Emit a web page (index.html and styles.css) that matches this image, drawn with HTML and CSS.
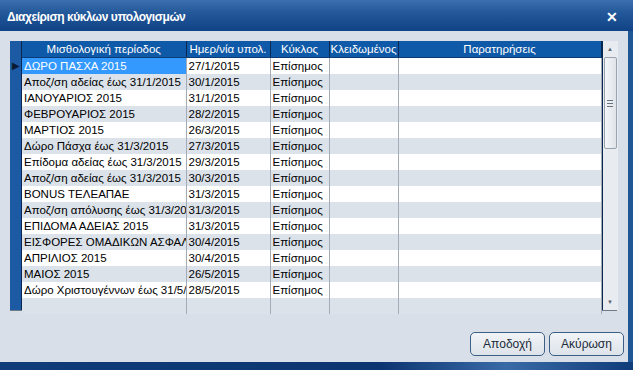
FILE: index.html
```html
<!DOCTYPE html>
<html lang="el">
<head>
    <meta charset="UTF-8">
    <title>Διαχείριση κύκλων υπολογισμών</title>
    <link rel="stylesheet" href="styles.css">
</head>
<body>
    <div class="window">
        <div class="titlebar">
            <span class="title">Διαχείριση κύκλων υπολογισμών</span>
            <span class="close">&#10005;</span>
        </div>
        <div class="client">
            <div class="grid">
                <div class="indicator">
                    <div class="ind-head"></div>
                    <div class="ind-cur">&#9654;</div>
                </div>
                <table class="rows">
                    <colgroup>
                        <col class="c-period">
                        <col class="c-date">
                        <col class="c-cycle">
                        <col class="c-locked">
                        <col class="c-notes">
                    </colgroup>
                    <thead>
                        <tr>
                            <th>Μισθολογική περίοδος</th>
                            <th>Ημερ/νία υπολ.</th>
                            <th>Κύκλος</th>
                            <th>Κλειδωμένος</th>
                            <th>Παρατηρήσεις</th>
                        </tr>
                    </thead>
                    <tbody>
                        <tr><td class="sel">ΔΩΡΟ ΠΑΣΧΑ 2015</td><td>27/1/2015</td><td>Επίσημος</td><td></td><td></td></tr>
                        <tr><td>Αποζ/ση αδείας έως 31/1/2015</td><td>30/1/2015</td><td>Επίσημος</td><td></td><td></td></tr>
                        <tr><td>ΙΑΝΟΥΑΡΙΟΣ 2015</td><td>31/1/2015</td><td>Επίσημος</td><td></td><td></td></tr>
                        <tr><td>ΦΕΒΡΟΥΑΡΙΟΣ 2015</td><td>28/2/2015</td><td>Επίσημος</td><td></td><td></td></tr>
                        <tr><td>ΜΑΡΤΙΟΣ 2015</td><td>26/3/2015</td><td>Επίσημος</td><td></td><td></td></tr>
                        <tr><td>Δώρο Πάσχα έως 31/3/2015</td><td>27/3/2015</td><td>Επίσημος</td><td></td><td></td></tr>
                        <tr><td>Επίδομα αδείας έως 31/3/2015</td><td>29/3/2015</td><td>Επίσημος</td><td></td><td></td></tr>
                        <tr><td>Αποζ/ση αδείας έως 31/3/2015</td><td>30/3/2015</td><td>Επίσημος</td><td></td><td></td></tr>
                        <tr><td>BONUS ΤΕΛΕΑΠΑΕ</td><td>31/3/2015</td><td>Επίσημος</td><td></td><td></td></tr>
                        <tr><td>Αποζ/ση απόλυσης έως 31/3/2015</td><td>31/3/2015</td><td>Επίσημος</td><td></td><td></td></tr>
                        <tr><td>ΕΠΙΔΟΜΑ ΑΔΕΙΑΣ 2015</td><td>31/3/2015</td><td>Επίσημος</td><td></td><td></td></tr>
                        <tr><td>ΕΙΣΦΟΡΕΣ ΟΜΑΔΙΚΩΝ ΑΣΦΑΛΙΣΤΡΩΝ</td><td>30/4/2015</td><td>Επίσημος</td><td></td><td></td></tr>
                        <tr><td>ΑΠΡΙΛΙΟΣ 2015</td><td>30/4/2015</td><td>Επίσημος</td><td></td><td></td></tr>
                        <tr><td>ΜΑΙΟΣ 2015</td><td>26/5/2015</td><td>Επίσημος</td><td></td><td></td></tr>
                        <tr><td>Δώρο Χριστουγέννων έως 31/5/2015</td><td>28/5/2015</td><td>Επίσημος</td><td></td><td></td></tr>
                        <tr><td></td><td></td><td></td><td></td><td></td></tr>
                    </tbody>
                </table>
                <div class="scrollbar">
                    <div class="arrow">&#9650;</div>
                    <div class="track">
                        <div class="thumb"><span class="grip"></span></div>
                    </div>
                    <div class="arrow">&#9660;</div>
                </div>
            </div>
            <div class="buttons">
                <button class="btn">Αποδοχή</button>
                <button class="btn">Ακύρωση</button>
            </div>
        </div>
        <div class="taskbar"></div>
    </div>
</body>
</html>
```

FILE: styles.css
```css
body {
    margin: 0;
    width: 633px;
    height: 370px;
    overflow: hidden;
    font-family: "Liberation Sans", Arial, sans-serif;
    background: #0e3a78;
}

.window {
    display: flex;
    flex-direction: column;
    height: 370px;
    background: linear-gradient(90deg, #d8dfe8 0, #d8dfe8 628px, #1f5795 628px);
}

.titlebar {
    height: 31px;
    display: flex;
    align-items: center;
    justify-content: space-between;
    padding: 0 15px 0 7px;
    background: linear-gradient(180deg, #3b6fae 0, #23589a 40%, #0f4386 100%);
    color: #fff;
    box-sizing: border-box;
}

.title {
    font-weight: bold;
    font-size: 12px;
    letter-spacing: -0.45px;
    padding-top: 2px;
}

.close {
    font-size: 14px;
    font-weight: bold;
    padding-top: 2px;
}

.client {
    flex: 1;
    display: flex;
    flex-direction: column;
    padding: 10px 16px 0 10px;
}

.grid {
    display: flex;
    height: 269px;
    border-bottom: 1px solid #6e7a86;
    background: #dbe2ea;
}

.indicator {
    width: 11px;
    flex: none;
    background: #1c5ba3;
    border-right: 1px solid #0a2850;
}

.ind-head {
    height: 17px;
}

.ind-cur {
    height: 16px;
    color: #0a1a30;
    font-size: 10px;
    line-height: 16px;
    padding-left: 2px;
}

.rows {
    width: 579px;
    flex: none;
    border-collapse: collapse;
    table-layout: fixed;
    font-size: 11.5px;
    align-self: flex-start;
}

.c-period { width: 164px; }
.c-date { width: 84px; }
.c-cycle { width: 59px; }
.c-locked { width: 69px; }
.c-notes { width: 203px; }

.rows th {
    height: 16px;
    background: #0f5aa8;
    color: #fff;
    font-weight: normal;
    border-right: 1px solid #0a2850;
    border-bottom: 1px solid #0a3c78;
    padding: 0;
    white-space: nowrap;
    overflow: hidden;
}

.rows td {
    height: 16px;
    padding: 0 0 0 2px;
    border-right: 1px solid #a3acb6;
    white-space: nowrap;
    overflow: hidden;
    color: #000;
}

.rows tbody tr:nth-child(odd) {
    background: #fff;
}

.rows tbody tr:nth-child(even) {
    background: #dbe2ea;
}

.rows td.sel {
    background: #3399ff;
    color: #fff;
}

.scrollbar {
    width: 15px;
    flex: none;
    display: flex;
    flex-direction: column;
    background: #e8ecf0;
    border-left: 1px solid #0a2850;
}

.arrow {
    height: 16px;
    font-size: 6px;
    color: #5a6570;
    text-align: center;
    line-height: 16px;
}

.track {
    flex: 1;
    padding: 0 1px;
}

.thumb {
    height: 90px;
    border: 1px solid #9aa3ad;
    border-radius: 2px;
    background: linear-gradient(90deg, #f4f6f8, #dfe4ea);
    display: flex;
    align-items: center;
    justify-content: center;
}

.grip {
    width: 6px;
    height: 5px;
    border-top: 1px solid #6a737c;
    border-bottom: 1px solid #6a737c;
    position: relative;
}

.grip::after {
    content: "";
    position: absolute;
    left: 0;
    right: 0;
    top: 2px;
    border-top: 1px solid #6a737c;
}

.buttons {
    display: flex;
    justify-content: flex-end;
    gap: 4px;
    margin-top: 21px;
    margin-right: -7px;
}

.btn {
    width: 75px;
    height: 24px;
    border: 1px solid #3d5f85;
    border-radius: 5px;
    background: linear-gradient(180deg, #f1f4f7, #dde3ea);
    font-family: "Liberation Sans", Arial, sans-serif;
    font-size: 12px;
    color: #1a2a3a;
    padding: 0;
}

.taskbar {
    height: 8px;
    background: linear-gradient(90deg, #0f3d7a 0, #0b3570 60%, #3a6aa6 80%, #0f3d7a 100%);
}
```
